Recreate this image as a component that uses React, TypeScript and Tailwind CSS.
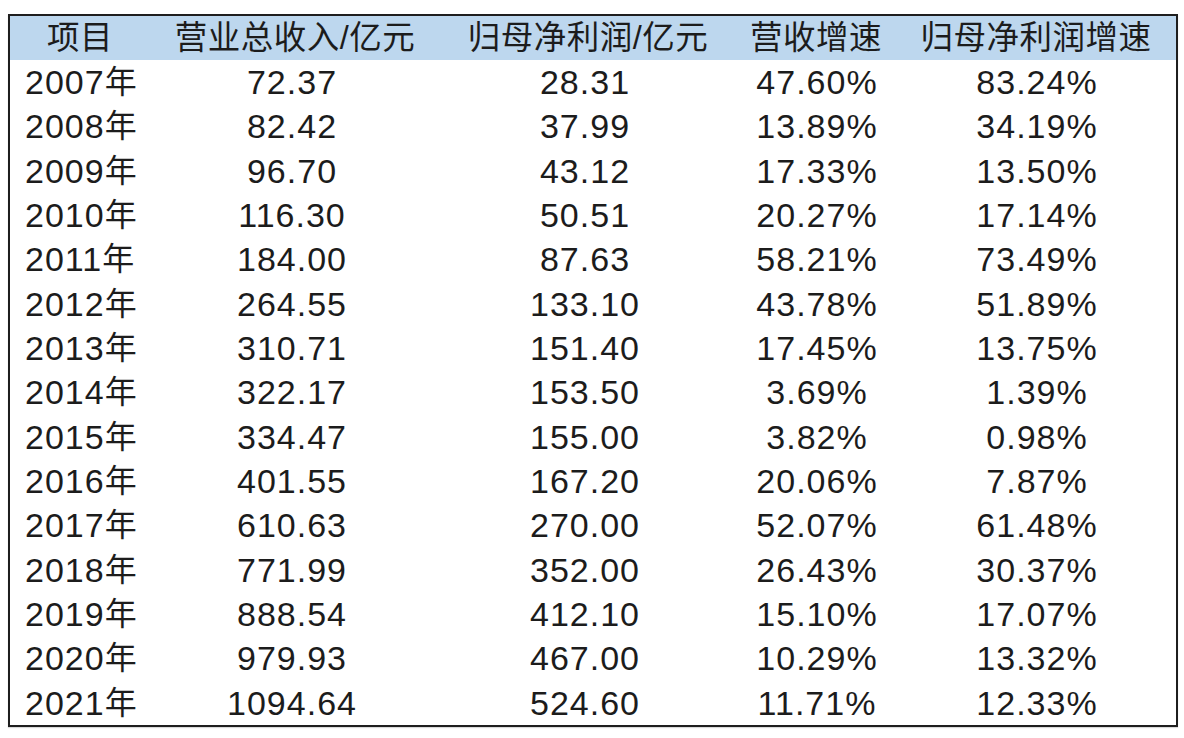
import * as React from 'react'

const headers = ['项目', '营业总收入/亿元', '归母净利润/亿元', '营收增速', '归母净利润增速']

const rows: string[][] = [
    ['2007', '72.37', '28.31', '47.60%', '83.24%'],
    ['2008', '82.42', '37.99', '13.89%', '34.19%'],
    ['2009', '96.70', '43.12', '17.33%', '13.50%'],
    ['2010', '116.30', '50.51', '20.27%', '17.14%'],
    ['2011', '184.00', '87.63', '58.21%', '73.49%'],
    ['2012', '264.55', '133.10', '43.78%', '51.89%'],
    ['2013', '310.71', '151.40', '17.45%', '13.75%'],
    ['2014', '322.17', '153.50', '3.69%', '1.39%'],
    ['2015', '334.47', '155.00', '3.82%', '0.98%'],
    ['2016', '401.55', '167.20', '20.06%', '7.87%'],
    ['2017', '610.63', '270.00', '52.07%', '61.48%'],
    ['2018', '771.99', '352.00', '26.43%', '30.37%'],
    ['2019', '888.54', '412.10', '15.10%', '17.07%'],
    ['2020', '979.93', '467.00', '10.29%', '13.32%'],
    ['2021', '1094.64', '524.60', '11.71%', '12.33%'],
]

const grid = 'grid grid-cols-[140px_290px_296px_160px_280px]'

function HeaderRow() {
    return (
        <div className={`${grid} h-[44px] bg-[#bdd7ee] text-[32.5px] tracking-[0.5px]`}>
            {headers.map((h) => (
                <div key={h} className="flex items-center justify-center">
                    {h}
                </div>
            ))}
        </div>
    )
}

function DataRow({ cells }: { cells: string[] }) {
    return (
        <div className={`${grid} h-[44.33px] text-[34px] tracking-[1px]`}>
            <div className="flex items-center pl-[15px]">
                {cells[0]}
                <span className="text-[32px] tracking-normal">年</span>
            </div>
            <div className="flex items-center justify-center pr-[6px]">{cells[1]}</div>
            <div className="flex items-center justify-center pr-[6px]">{cells[2]}</div>
            <div className="flex items-center justify-center pl-[2px]">{cells[3]}</div>
            <div className="flex items-center justify-center pl-[2px]">{cells[4]}</div>
        </div>
    )
}

export default function App() {
    return (
        <div className="w-[1184px] h-[738px] bg-white pt-[14px] pl-[8px]">
            <div
                className="w-[1170px] border-2 border-[#1e1e1e] leading-none text-[#1c1c1c] shadow-[0_1px_1px_rgba(0,0,0,0.15)]"
                style={{ fontFamily: '"Liberation Sans", "Noto Sans CJK SC", sans-serif' }}
            >
                <HeaderRow />
                {rows.map((r) => (
                    <DataRow key={r[0]} cells={r} />
                ))}
            </div>
        </div>
    )
}
